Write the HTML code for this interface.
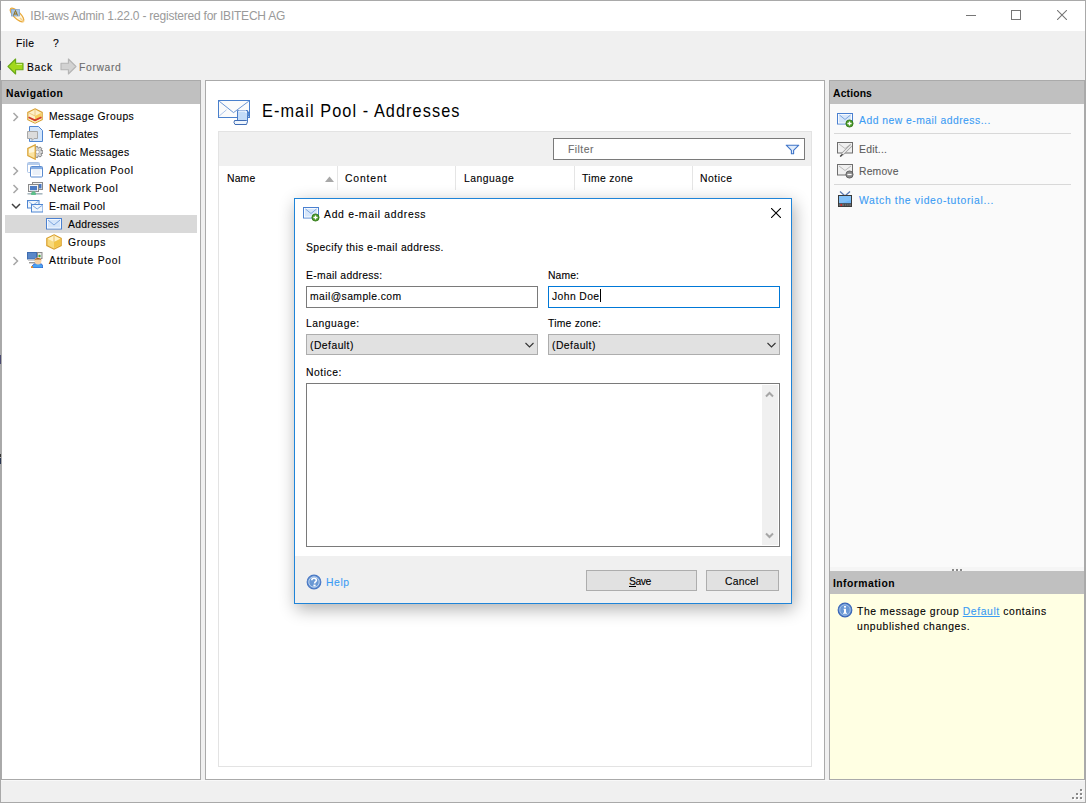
<!DOCTYPE html>
<html><head><meta charset="utf-8"><style>
html,body{margin:0;padding:0;}
body{width:1086px;height:803px;position:relative;overflow:hidden;font-family:"Liberation Sans",sans-serif;background:#f0f0f0;}
.t{position:absolute;white-space:nowrap;transform-origin:0 0;}
.r{position:absolute;display:block;}
u{text-decoration:underline;}
</style></head><body>
<div class="r" style="left:0px;top:0px;width:1086px;height:803px;background:#f0f0f0;"></div>
<div class="r" style="left:0px;top:0px;width:1086px;height:31px;background:#fff;"></div>
<div class="r" style="left:0px;top:0px;width:1086px;height:1px;background:#a9a9a9;"></div>
<div class="r" style="left:0px;top:802px;width:1086px;height:1px;background:#a9a9a9;"></div>
<div class="r" style="left:0px;top:0px;width:1px;height:803px;background:#a9a9a9;"></div>
<div class="r" style="left:1085px;top:0px;width:1px;height:803px;background:#a9a9a9;"></div>
<div class="r" style="left:0px;top:61px;width:1px;height:9px;background:#4d4d6c;"></div>
<div class="r" style="left:0px;top:355px;width:1px;height:9px;background:#4a4a70;"></div>
<div class="r" style="left:0px;top:454px;width:1px;height:3px;background:#333;"></div>
<div class="r" style="left:0px;top:458px;width:1px;height:6px;background:#2a3550;"></div>
<svg class="r" style="left:8px;top:6px;" width="18" height="18" viewBox="0 0 18 18"><g transform="rotate(-45 9 9)"><ellipse cx="9" cy="9" rx="3.4" ry="9" fill="#fff6e0" stroke="#e9a838" stroke-width="1.3"/></g>
<rect x="3.5" y="3.5" width="8" height="6.5" fill="#a9c6e6" stroke="#7d9fc8" stroke-width="0.7"/>
<path d="M5.5 9.5 L7.5 4.5 L9.5 9.5 M6.3 8 L8.7 8" stroke="#8f6c12" stroke-width="1" fill="none"/>
<path d="M12 12 L16 16" stroke="#f6d08a" stroke-width="1.5"/></svg>
<div class="t" style="left:30.30px;top:9.84px;font-size:12px;line-height:12px;color:#9a9a9a;letter-spacing:-0.221px;">IBI-aws Admin 1.22.0 - registered for IBITECH AG</div>
<div class="r" style="left:966px;top:15px;width:10px;height:1px;background:#767676;"></div>
<div class="r" style="left:1011px;top:10px;width:10px;height:10px;box-sizing:border-box;border:1px solid #767676;"></div>
<svg class="r" style="left:1057px;top:10px;" width="10" height="10" viewBox="0 0 10 10"><path d="M0 0 L10 10 M10 0 L0 10" stroke="#767676" stroke-width="1.05"/></svg>
<div class="t" style="left:16.10px;top:38.27px;font-size:11.5px;line-height:11.5px;color:#000;letter-spacing:0.463px;transform:scaleX(0.9);-webkit-text-stroke:0.12px currentColor;">File</div>
<div class="t" style="left:53.00px;top:38.27px;font-size:11.5px;line-height:11.5px;color:#000;transform:scaleX(0.9);-webkit-text-stroke:0.12px currentColor;">?</div>
<svg class="r" style="left:7px;top:58px;" width="18" height="17" viewBox="0 0 18 17"><path d="M1 8.5 L8.6 1 L8.6 5.2 L16 5.2 L16 11.8 L8.6 11.8 L8.6 16 Z" fill="#a2d81c" stroke="#68a818" stroke-width="1.1" stroke-linejoin="round"/>
<path d="M9.5 6.5 L15 6.5" stroke="#d4f08a" stroke-width="1"/></svg>
<div class="t" style="left:27.10px;top:62.27px;font-size:11.5px;line-height:11.5px;color:#000;letter-spacing:0.763px;transform:scaleX(0.9);-webkit-text-stroke:0.12px currentColor;">Back</div>
<svg class="r" style="left:59px;top:58px;" width="18" height="17" viewBox="0 0 18 17"><path d="M17 8.5 L9.4 1 L9.4 5.2 L2 5.2 L2 11.8 L9.4 11.8 L9.4 16 Z" fill="#d2d2d2" stroke="#b4b4b4" stroke-width="1.1" stroke-linejoin="round"/></svg>
<div class="t" style="left:79.30px;top:62.27px;font-size:11.5px;line-height:11.5px;color:#6d6d6d;letter-spacing:0.726px;transform:scaleX(0.9);-webkit-text-stroke:0.12px currentColor;">Forward</div>
<div class="r" style="left:1px;top:80px;width:200px;height:700px;box-sizing:border-box;border:1px solid #aaaaaa;background:#fff;"></div>
<div class="r" style="left:2px;top:81px;width:198px;height:23px;background:#c0c0c0;"></div>
<div class="t" style="left:5.50px;top:88.27px;font-size:11.5px;line-height:11.5px;color:#000;font-weight:bold;letter-spacing:0.491px;transform:scaleX(0.9);">Navigation</div>
<svg class="r" style="left:12px;top:112px;" width="8" height="10" viewBox="0 0 8 10"><path d="M1.5 1 L5.5 5 L1.5 9" stroke="#a6a6a6" stroke-width="1.5" fill="none"/></svg>
<svg class="r" style="left:27px;top:108px;" width="16" height="16" viewBox="0 0 16 16"><path d="M8 0.8 L15.2 4.4 L15.2 11.6 L8 15.2 L0.8 11.6 L0.8 4.4 Z" fill="#fdf0c8" stroke="#d9a338" stroke-width="1.2"/>
<path d="M8 2 L8 8 M1.8 4.8 L8 8" stroke="#e8c070" stroke-width="0.8" fill="none"/>
<path d="M8 8 L14.4 4.8 L14.4 9 L8 12" fill="#f6c84c" opacity="0.85"/>
<path d="M1.5 9.2 L8 12.4 L14.5 9.2" stroke="#d23c2a" stroke-width="1.8" fill="none"/>
<path d="M1.5 11 L8 14.2 L14.5 11" stroke="#fbf0b0" stroke-width="1" fill="none"/>
</svg>
<div class="t" style="left:48.50px;top:111.27px;font-size:11.5px;line-height:11.5px;color:#000;letter-spacing:0.509px;transform:scaleX(0.9);-webkit-text-stroke:0.12px currentColor;">Message Groups</div>
<svg class="r" style="left:27px;top:126px;" width="16" height="16" viewBox="0 0 16 16"><path d="M2.5 0.5 L11.5 0.5 L15.5 4.5 L15.5 15.5 L2.5 15.5 Z" fill="#d4e6fb" stroke="#4f86d2" stroke-width="1"/>
<path d="M0.5 5.5 L10.5 5.5 L10.5 12.5 L7 12.5 L5 14.5 L5 12.5 L0.5 12.5 Z" fill="#dcdcdc" stroke="#a8a8a8" stroke-width="1"/></svg>
<div class="t" style="left:48.50px;top:129.27px;font-size:11.5px;line-height:11.5px;color:#000;letter-spacing:0.283px;transform:scaleX(0.9);-webkit-text-stroke:0.12px currentColor;">Templates</div>
<svg class="r" style="left:27px;top:144px;" width="16" height="16" viewBox="0 0 16 16"><path d="M14.10 6.50 L15.94 6.69 L15.94 9.31 L14.10 9.50 L13.92 9.88 L14.92 11.44 L12.87 13.08 L11.57 11.75 L11.16 11.84 L10.57 13.60 L8.01 13.01 L8.24 11.18 L7.91 10.91 L6.17 11.55 L5.03 9.18 L6.61 8.21 L6.61 7.79 L5.03 6.82 L6.17 4.45 L7.91 5.09 L8.24 4.82 L8.01 2.99 L10.57 2.40 L11.16 4.16 L11.57 4.25 L12.87 2.92 L14.92 4.56 L13.92 6.12 Z" fill="#d6d6d6" stroke="#7a7a7a" stroke-width="0.9"/>
<circle cx="10.5" cy="8" r="1.8" fill="#fff" stroke="#999" stroke-width="0.6"/>
<path d="M8.2 0.8 L8.2 15.2 L0.8 11.6 L0.8 4.4 Z" fill="#fbe3a0" stroke="#d9a338" stroke-width="1.2"/>
<path d="M2 5 L7.3 2.4 L7.3 8 L2 9 Z" fill="#fff7dc"/>
</svg>
<div class="t" style="left:48.50px;top:147.27px;font-size:11.5px;line-height:11.5px;color:#000;letter-spacing:0.329px;transform:scaleX(0.9);-webkit-text-stroke:0.12px currentColor;">Static Messages</div>
<svg class="r" style="left:12px;top:166px;" width="8" height="10" viewBox="0 0 8 10"><path d="M1.5 1 L5.5 5 L1.5 9" stroke="#a6a6a6" stroke-width="1.5" fill="none"/></svg>
<svg class="r" style="left:27px;top:162px;" width="16" height="16" viewBox="0 0 16 16"><rect x="0.5" y="0.5" width="12" height="10" rx="1" fill="#fff" stroke="#a9c2e6"/>
<rect x="1" y="1" width="11" height="2" fill="#b6cdec"/>
<rect x="3.5" y="4.5" width="12" height="10.5" rx="1" fill="#fff" stroke="#5a8bd0"/>
<rect x="4" y="5" width="11" height="2.2" fill="#86ade2"/>
<rect x="5.5" y="8" width="8" height="5" fill="#eaf0f8"/></svg>
<div class="t" style="left:48.50px;top:165.27px;font-size:11.5px;line-height:11.5px;color:#000;letter-spacing:0.722px;transform:scaleX(0.9);-webkit-text-stroke:0.12px currentColor;">Application Pool</div>
<svg class="r" style="left:12px;top:184px;" width="8" height="10" viewBox="0 0 8 10"><path d="M1.5 1 L5.5 5 L1.5 9" stroke="#a6a6a6" stroke-width="1.5" fill="none"/></svg>
<svg class="r" style="left:27px;top:180px;" width="16" height="16" viewBox="0 0 16 16"><rect x="5.5" y="2.5" width="10" height="7" fill="#f4f4f4" stroke="#8a8a8a"/>
<rect x="12" y="4" width="2.5" height="4.5" fill="#4a78c0"/>
<rect x="1.5" y="4.5" width="10" height="7" fill="#f4f4f4" stroke="#8a8a8a"/>
<rect x="3" y="6" width="7" height="4.2" fill="#4d7cc4"/>
<rect x="4" y="11.5" width="5" height="1.2" fill="#aaa"/>
<rect x="0.5" y="13" width="15" height="1.6" fill="#a8b8c0"/>
<rect x="5" y="11.5" width="3" height="3.2" fill="#5cc08a"/><rect x="4" y="13" width="5" height="1.8" fill="#5cc08a"/></svg>
<div class="t" style="left:48.50px;top:183.27px;font-size:11.5px;line-height:11.5px;color:#000;letter-spacing:0.731px;transform:scaleX(0.9);-webkit-text-stroke:0.12px currentColor;">Network Pool</div>
<svg class="r" style="left:11px;top:203px;" width="10" height="7" viewBox="0 0 10 7"><path d="M1 1 L5 5 L9 1" stroke="#404040" stroke-width="1.5" fill="none"/></svg>
<svg class="r" style="left:27px;top:198px;" width="16" height="16" viewBox="0 0 16 16"><rect x="0.5" y="2.5" width="11.5" height="7.5" fill="#f2f7fd" stroke="#4f86d2"/>
<path d="M1.5 3.5 L6.2 7 L11 3.5" stroke="#8fb2e2" fill="none"/>
<rect x="4.5" y="6.5" width="11.5" height="7.5" fill="#f2f7fd" stroke="#4f86d2"/>
<path d="M5.5 7.5 L10.2 11 L15 7.5" stroke="#7ea6de" fill="none"/></svg>
<div class="t" style="left:48.50px;top:201.27px;font-size:11.5px;line-height:11.5px;color:#000;letter-spacing:0.342px;transform:scaleX(0.9);-webkit-text-stroke:0.12px currentColor;">E-mail Pool</div>
<div class="r" style="left:5px;top:215px;width:192px;height:18px;background:#d9d9d9;"></div>
<svg class="r" style="left:46px;top:216px;" width="16" height="16" viewBox="0 0 16 16"><rect x="0.5" y="2.5" width="15" height="10.5" fill="#d6e6fa" stroke="#4a80d0"/>
<rect x="1.5" y="3.5" width="13" height="8.5" fill="none" stroke="#fff" stroke-width="0.8"/>
<path d="M2 4 L8 9 L14 4" stroke="#7ea6de" stroke-width="1" fill="none"/></svg>
<div class="t" style="left:67.50px;top:219.27px;font-size:11.5px;line-height:11.5px;color:#000;letter-spacing:0.296px;transform:scaleX(0.9);-webkit-text-stroke:0.12px currentColor;">Addresses</div>
<svg class="r" style="left:46px;top:234px;" width="16" height="16" viewBox="0 0 16 16"><path d="M8 0.8 L15.2 4.4 L15.2 11.6 L8 15.2 L0.8 11.6 L0.8 4.4 Z" fill="#f8d97a" stroke="#d9a030" stroke-width="1.2"/>
<path d="M1.5 4.8 L8 8 L14.5 4.8 L8 1.5 Z" fill="#fff2c4"/>
<path d="M8 8 L14.5 4.8 L14.5 11 L8 14" fill="#f0be3a" opacity="0.8"/>
<path d="M8 2 L8 8" stroke="#e0b050" stroke-width="0.8"/></svg>
<div class="t" style="left:67.50px;top:237.27px;font-size:11.5px;line-height:11.5px;color:#000;letter-spacing:0.749px;transform:scaleX(0.9);-webkit-text-stroke:0.12px currentColor;">Groups</div>
<svg class="r" style="left:12px;top:256px;" width="8" height="10" viewBox="0 0 8 10"><path d="M1.5 1 L5.5 5 L1.5 9" stroke="#a6a6a6" stroke-width="1.5" fill="none"/></svg>
<svg class="r" style="left:27px;top:252px;" width="16" height="16" viewBox="0 0 16 16"><rect x="0.5" y="0.5" width="9" height="6.5" fill="#5a88c8" stroke="#3e6cb0"/>
<rect x="1" y="7.5" width="8" height="1.5" fill="#cfcfcf"/><rect x="2" y="10" width="6" height="1.4" fill="#9a9a9a"/>
<rect x="10.5" y="0.5" width="4.5" height="6" fill="#e8e8e8" stroke="#8a8a8a"/>
<circle cx="12.5" cy="4" r="1.2" fill="#3fa83a"/>
<path d="M5 16 C5 12.5 7 11.5 11 11.5 C15 11.5 16 12.5 16 16 Z" fill="#4aa2f2" stroke="#2a50c0" stroke-width="0.8"/>
<circle cx="11" cy="9" r="3.4" fill="#f6d2a6"/>
<path d="M7.5 8.5 C7.5 5 14.5 5 14.5 8.5 L13.5 7.5 L8.5 7.5 Z" fill="#9a5214"/>
<rect x="4" y="14.3" width="2" height="1.7" fill="#e88a20"/></svg>
<div class="t" style="left:48.50px;top:255.27px;font-size:11.5px;line-height:11.5px;color:#000;letter-spacing:0.803px;transform:scaleX(0.9);-webkit-text-stroke:0.12px currentColor;">Attribute Pool</div>
<div class="r" style="left:205px;top:80px;width:620px;height:700px;box-sizing:border-box;border:1px solid #aaaaaa;background:#fff;"></div>
<svg class="r" style="left:218px;top:100px;" width="33" height="26" viewBox="0 0 33 26"><rect x="0.5" y="0.5" width="31" height="17" fill="#fbfbfb" stroke="#4a80cc" stroke-width="1"/>
<path d="M1.2 1.2 L15.5 12.6 L30.8 1.2" stroke="#5a8ad0" stroke-width="0.9" fill="none"/>
<path d="M1.2 16 L8.5 9.8" stroke="#9ab8e4" stroke-width="0.8" fill="none"/>
<path d="M19.5 10.5 L29.5 10.5 L29.5 21.5 L19.5 21.5 Z" fill="#c4dcf8" stroke="#4a7cc8" stroke-width="1"/>
<path d="M20.5 11 L28 11 L28 13" stroke="#fff" stroke-width="1" fill="none"/>
<path d="M16.5 20.5 L28.5 20.5 L29.5 21.5 L28.5 24.5 L17 24.5 L16 22.5 Z" fill="#eef5fd" stroke="#3f6cb4" stroke-width="1"/>
<path d="M29.5 12 L31 12 L31 16 L29.5 16" fill="#6a9ad8" stroke="#3f74c4" stroke-width="0.8"/></svg>
<div class="t" style="left:262.10px;top:102.34px;font-size:18.5px;line-height:18.5px;color:#000;letter-spacing:1.224px;transform:scaleX(0.88);">E-mail Pool - Addresses</div>
<div class="r" style="left:218px;top:131px;width:594px;height:636px;box-sizing:border-box;border:1px solid #e3e3e3;background:#fff;"></div>
<div class="r" style="left:219px;top:132px;width:592px;height:34px;background:#f0f0f0;"></div>
<div class="r" style="left:553px;top:138px;width:252px;height:22px;box-sizing:border-box;border:1px solid #7a7a7a;background:#fff;"></div>
<div class="t" style="left:567.50px;top:144.27px;font-size:11.5px;line-height:11.5px;color:#6d6d6d;letter-spacing:0.524px;transform:scaleX(0.9);-webkit-text-stroke:0.12px currentColor;">Filter</div>
<svg class="r" style="left:785px;top:144px;" width="15" height="11" viewBox="0 0 15 11"><path d="M1.2 1.2 L13.8 1.2 L8.6 6.4 L8.6 9.8 L6.4 9.8 L6.4 6.4 Z" fill="#e0ecfb" stroke="#3f74c8" stroke-width="1.1" stroke-linejoin="round"/></svg>
<div class="r" style="left:337px;top:166px;width:1px;height:24px;background:#e5e5e5;"></div>
<div class="r" style="left:455px;top:166px;width:1px;height:24px;background:#e5e5e5;"></div>
<div class="r" style="left:574px;top:166px;width:1px;height:24px;background:#e5e5e5;"></div>
<div class="r" style="left:692px;top:166px;width:1px;height:24px;background:#e5e5e5;"></div>
<div class="t" style="left:226.50px;top:173.27px;font-size:11.5px;line-height:11.5px;color:#000;letter-spacing:0.211px;transform:scaleX(0.9);-webkit-text-stroke:0.12px currentColor;">Name</div>
<div class="t" style="left:345.20px;top:173.27px;font-size:11.5px;line-height:11.5px;color:#000;letter-spacing:0.950px;transform:scaleX(0.9);-webkit-text-stroke:0.12px currentColor;">Content</div>
<div class="t" style="left:463.50px;top:173.27px;font-size:11.5px;line-height:11.5px;color:#000;letter-spacing:0.575px;transform:scaleX(0.9);-webkit-text-stroke:0.12px currentColor;">Language</div>
<div class="t" style="left:581.90px;top:173.27px;font-size:11.5px;line-height:11.5px;color:#000;letter-spacing:0.393px;transform:scaleX(0.9);-webkit-text-stroke:0.12px currentColor;">Time zone</div>
<div class="t" style="left:700.20px;top:173.27px;font-size:11.5px;line-height:11.5px;color:#000;letter-spacing:0.613px;transform:scaleX(0.9);-webkit-text-stroke:0.12px currentColor;">Notice</div>
<svg class="r" style="left:325px;top:176px;" width="10" height="6" viewBox="0 0 10 6"><path d="M0 6 L4.5 0.5 L9 6 Z" fill="#a8a8a8"/></svg>
<div class="r" style="left:829px;top:80px;width:256px;height:700px;box-sizing:border-box;border:1px solid #aaaaaa;background:#fafafa;"></div>
<div class="r" style="left:830px;top:81px;width:254px;height:23px;background:#c0c0c0;"></div>
<div class="t" style="left:833.20px;top:88.27px;font-size:11.5px;line-height:11.5px;color:#000;font-weight:bold;letter-spacing:0.170px;transform:scaleX(0.9);">Actions</div>
<svg class="r" style="left:837px;top:113px;" width="17" height="15" viewBox="0 0 17 15"><rect x="0.5" y="0.5" width="15" height="10.5" fill="#d6e6fa" stroke="#4a80d0"/>
<rect x="1.5" y="1.5" width="13" height="8.5" fill="none" stroke="#fff" stroke-width="0.8"/>
<path d="M2.5 2 L8 6.5 L13.5 2" stroke="#7ea6de" stroke-width="1" fill="none"/>
<circle cx="12.5" cy="10.5" r="3.6" fill="#4b9a26" stroke="#2f7418" stroke-width="0.8"/>
<path d="M12.5 8.4 L12.5 12.6 M10.4 10.5 L14.6 10.5" stroke="#fff" stroke-width="1.3"/></svg>
<div class="t" style="left:859.20px;top:115.27px;font-size:11.5px;line-height:11.5px;color:#3c9cf4;letter-spacing:0.537px;transform:scaleX(0.9);-webkit-text-stroke:0.12px currentColor;">Add new e-mail address...</div>
<div class="r" style="left:834px;top:133px;width:237px;height:1px;background:#d8d8d8;"></div>
<svg class="r" style="left:837px;top:142px;" width="17" height="15" viewBox="0 0 17 15"><rect x="0.5" y="0.5" width="15" height="10.5" fill="#f0f0f0" stroke="#6e6e6e"/>
<path d="M2 2 L8 6.5 L14 2" stroke="#bbb" stroke-width="1" fill="none"/>
<path d="M5 12.5 L14 3.5" stroke="#9a9a9a" stroke-width="2.8"/><path d="M5 12.5 L14 3.5" stroke="#f2f2f2" stroke-width="1.2"/>
<path d="M3.2 14.6 L5.6 12.2" stroke="#444" stroke-width="1.4"/></svg>
<div class="t" style="left:859.20px;top:144.27px;font-size:11.5px;line-height:11.5px;color:#5c5c5c;letter-spacing:0.267px;transform:scaleX(0.9);-webkit-text-stroke:0.12px currentColor;">Edit...</div>
<svg class="r" style="left:837px;top:164px;" width="17" height="15" viewBox="0 0 17 15"><rect x="0.5" y="0.5" width="15" height="10.5" fill="#f0f0f0" stroke="#6e6e6e"/>
<path d="M2 2 L8 6.5 L14 2" stroke="#bbb" stroke-width="1" fill="none"/>
<circle cx="12.5" cy="10.5" r="3.6" fill="#8a8a8a" stroke="#555" stroke-width="0.8"/>
<path d="M10.4 10.5 L14.6 10.5" stroke="#fff" stroke-width="1.3"/></svg>
<div class="t" style="left:859.20px;top:166.27px;font-size:11.5px;line-height:11.5px;color:#5c5c5c;letter-spacing:0.196px;transform:scaleX(0.9);-webkit-text-stroke:0.12px currentColor;">Remove</div>
<div class="r" style="left:834px;top:184px;width:237px;height:1px;background:#d8d8d8;"></div>
<svg class="r" style="left:837px;top:190px;" width="17" height="18" viewBox="0 0 17 18"><path d="M3 1.5 L7.5 5.5 M13 1.5 L8.5 5.5" stroke="#5a7ab0" stroke-width="1.3"/>
<rect x="1.5" y="5.5" width="13" height="11" fill="#70b6f6" stroke="#3a3a3a"/>
<path d="M2 6 L14 6 L14 10 L2 14 Z" fill="#90c8fa" opacity="0.6"/>
<rect x="1.5" y="13.6" width="13" height="2.9" fill="#6a6a6a" stroke="#333" stroke-width="0.6"/>
<circle cx="4.2" cy="15" r="0.9" fill="#e02020"/><path d="M7 15 L13 15" stroke="#222" stroke-width="0.8" stroke-dasharray="1 1.2"/></svg>
<div class="t" style="left:859.20px;top:194.77px;font-size:11.5px;line-height:11.5px;color:#3c9cf4;letter-spacing:0.748px;transform:scaleX(0.9);-webkit-text-stroke:0.12px currentColor;">Watch the video-tutorial...</div>
<div class="r" style="left:830px;top:567px;width:254px;height:4px;background:#f5f5f5;"></div>
<div class="r" style="left:953px;top:570px;width:2px;height:2px;background:#fff;"></div>
<div class="r" style="left:952px;top:569px;width:2px;height:2px;background:#8a8a8a;"></div>
<div class="r" style="left:957px;top:570px;width:2px;height:2px;background:#fff;"></div>
<div class="r" style="left:956px;top:569px;width:2px;height:2px;background:#8a8a8a;"></div>
<div class="r" style="left:961px;top:570px;width:2px;height:2px;background:#fff;"></div>
<div class="r" style="left:960px;top:569px;width:2px;height:2px;background:#8a8a8a;"></div>
<div class="r" style="left:830px;top:571px;width:254px;height:23px;background:#c0c0c0;"></div>
<div class="r" style="left:830px;top:594px;width:254px;height:185px;background:#ffffe3;"></div>
<div class="r" style="left:829px;top:571px;width:1px;height:208px;background:#aaaaaa;"></div>
<div class="r" style="left:1084px;top:571px;width:1px;height:208px;background:#aaaaaa;"></div>
<div class="t" style="left:833.20px;top:578.27px;font-size:11.5px;line-height:11.5px;color:#000;font-weight:bold;letter-spacing:0.513px;transform:scaleX(0.9);">Information</div>
<svg class="r" style="left:837px;top:602px;" width="16" height="16" viewBox="0 0 16 16"><circle cx="8" cy="8" r="6.8" fill="#6a98d4" stroke="#3a66b8" stroke-width="1.2"/>
<circle cx="8" cy="8" r="5.2" fill="none" stroke="#a8c4ea" stroke-width="0.8"/>
<rect x="7" y="4" width="2" height="1.6" fill="#fff"/><path d="M6.6 6.8 L9 6.8 L9 10.8 L10 10.8 L10 11.8 L6 11.8 L6 10.8 L7 10.8 L7 7.8 L6.6 7.8 Z" fill="#fff"/></svg>
<div class="t" style="left:857.00px;top:606.27px;font-size:11.5px;line-height:11.5px;color:#000;letter-spacing:0.670px;transform:scaleX(0.9);-webkit-text-stroke:0.12px currentColor;">The message group <u style="color:#3c9cf4">Default</u> contains</div>
<div class="t" style="left:857.00px;top:621.27px;font-size:11.5px;line-height:11.5px;color:#000;letter-spacing:0.701px;transform:scaleX(0.9);-webkit-text-stroke:0.12px currentColor;">unpublished changes.</div>
<div class="r" style="left:1px;top:780px;width:1084px;height:1px;background:#f8f8f8;"></div>
<div class="r" style="left:1081px;top:790px;width:2px;height:2px;background:#fff;"></div>
<div class="r" style="left:1080px;top:789px;width:2px;height:2px;background:#8a8a8a;"></div>
<div class="r" style="left:1077px;top:794px;width:2px;height:2px;background:#fff;"></div>
<div class="r" style="left:1076px;top:793px;width:2px;height:2px;background:#8a8a8a;"></div>
<div class="r" style="left:1081px;top:794px;width:2px;height:2px;background:#fff;"></div>
<div class="r" style="left:1080px;top:793px;width:2px;height:2px;background:#8a8a8a;"></div>
<div class="r" style="left:1073px;top:798px;width:2px;height:2px;background:#fff;"></div>
<div class="r" style="left:1072px;top:797px;width:2px;height:2px;background:#8a8a8a;"></div>
<div class="r" style="left:1077px;top:798px;width:2px;height:2px;background:#fff;"></div>
<div class="r" style="left:1076px;top:797px;width:2px;height:2px;background:#8a8a8a;"></div>
<div class="r" style="left:1081px;top:798px;width:2px;height:2px;background:#fff;"></div>
<div class="r" style="left:1080px;top:797px;width:2px;height:2px;background:#8a8a8a;"></div>
<div class="r" style="left:294px;top:198px;width:498px;height:406px;box-sizing:border-box;border:1px solid #1f84d8;background:#fff;box-shadow:2px 5px 16px rgba(0,0,0,0.32);"></div>
<div class="r" style="left:295px;top:556px;width:496px;height:47px;background:#f0f0f0;"></div>
<svg class="r" style="left:303px;top:207px;" width="17" height="15" viewBox="0 0 17 15"><rect x="0.5" y="0.5" width="15" height="10.5" fill="#d6e6fa" stroke="#4a80d0"/>
<rect x="1.5" y="1.5" width="13" height="8.5" fill="none" stroke="#fff" stroke-width="0.8"/>
<path d="M2.5 2 L8 6.5 L13.5 2" stroke="#7ea6de" stroke-width="1" fill="none"/>
<circle cx="12.5" cy="10.5" r="3.6" fill="#4b9a26" stroke="#2f7418" stroke-width="0.8"/>
<path d="M12.5 8.4 L12.5 12.6 M10.4 10.5 L14.6 10.5" stroke="#fff" stroke-width="1.3"/></svg>
<div class="t" style="left:324.00px;top:209.27px;font-size:11.5px;line-height:11.5px;color:#000;letter-spacing:0.805px;transform:scaleX(0.9);-webkit-text-stroke:0.12px currentColor;">Add e-mail address</div>
<svg class="r" style="left:771px;top:208px;" width="10" height="10" viewBox="0 0 10 10"><path d="M0 0 L10 10 M10 0 L0 10" stroke="#000" stroke-width="1.1"/></svg>
<div class="t" style="left:306.20px;top:242.27px;font-size:11.5px;line-height:11.5px;color:#000;letter-spacing:0.447px;transform:scaleX(0.9);-webkit-text-stroke:0.12px currentColor;">Specify this e-mail address.</div>
<div class="t" style="left:306.20px;top:270.27px;font-size:11.5px;line-height:11.5px;color:#000;letter-spacing:0.340px;transform:scaleX(0.9);-webkit-text-stroke:0.12px currentColor;">E-mail address:</div>
<div class="t" style="left:548.30px;top:270.27px;font-size:11.5px;line-height:11.5px;color:#000;letter-spacing:0.108px;transform:scaleX(0.9);-webkit-text-stroke:0.12px currentColor;">Name:</div>
<div class="r" style="left:306px;top:286px;width:232px;height:22px;box-sizing:border-box;border:1px solid #7a7a7a;background:#fff;"></div>
<div class="t" style="left:309.80px;top:291.27px;font-size:11.5px;line-height:11.5px;color:#000;letter-spacing:0.466px;transform:scaleX(0.9);-webkit-text-stroke:0.12px currentColor;">mail@sample.com</div>
<div class="r" style="left:548px;top:286px;width:232px;height:22px;box-sizing:border-box;border:1px solid #0078d7;background:#fff;"></div>
<div class="t" style="left:551.50px;top:291.27px;font-size:11.5px;line-height:11.5px;color:#000;letter-spacing:0.448px;transform:scaleX(0.9);-webkit-text-stroke:0.12px currentColor;">John Doe</div>
<div class="r" style="left:600px;top:289px;width:1px;height:13px;background:#000;"></div>
<div class="t" style="left:306.20px;top:318.27px;font-size:11.5px;line-height:11.5px;color:#000;letter-spacing:0.575px;transform:scaleX(0.9);-webkit-text-stroke:0.12px currentColor;">Language:</div>
<div class="t" style="left:548.30px;top:318.27px;font-size:11.5px;line-height:11.5px;color:#000;letter-spacing:0.253px;transform:scaleX(0.9);-webkit-text-stroke:0.12px currentColor;">Time zone:</div>
<div class="r" style="left:306px;top:334px;width:232px;height:21px;box-sizing:border-box;border:1px solid #adadad;background:#e1e1e1;"></div>
<div class="t" style="left:310.10px;top:340.27px;font-size:11.5px;line-height:11.5px;color:#000;letter-spacing:0.515px;transform:scaleX(0.9);-webkit-text-stroke:0.12px currentColor;">(Default)</div>
<svg class="r" style="left:525px;top:342px;" width="10" height="7" viewBox="0 0 10 7"><path d="M0.5 1 L4.5 5 L8.5 1" stroke="#333" stroke-width="1.1" fill="none"/></svg>
<div class="r" style="left:548px;top:334px;width:232px;height:21px;box-sizing:border-box;border:1px solid #adadad;background:#e1e1e1;"></div>
<div class="t" style="left:552.10px;top:340.27px;font-size:11.5px;line-height:11.5px;color:#000;letter-spacing:0.515px;transform:scaleX(0.9);-webkit-text-stroke:0.12px currentColor;">(Default)</div>
<svg class="r" style="left:767px;top:342px;" width="10" height="7" viewBox="0 0 10 7"><path d="M0.5 1 L4.5 5 L8.5 1" stroke="#333" stroke-width="1.1" fill="none"/></svg>
<div class="t" style="left:306.20px;top:367.27px;font-size:11.5px;line-height:11.5px;color:#000;letter-spacing:0.570px;transform:scaleX(0.9);-webkit-text-stroke:0.12px currentColor;">Notice:</div>
<div class="r" style="left:306px;top:383px;width:474px;height:164px;box-sizing:border-box;border:1px solid #7a7a7a;background:#fff;"></div>
<div class="r" style="left:762px;top:385px;width:16px;height:160px;background:#f0f0f0;"></div>
<svg class="r" style="left:765px;top:390px;" width="9" height="8" viewBox="0 0 9 8"><path d="M1 6.5 L4.5 3 L8 6.5" stroke="#a6a6a6" stroke-width="2" fill="none"/></svg>
<svg class="r" style="left:765px;top:532px;" width="9" height="8" viewBox="0 0 9 8"><path d="M1 1.5 L4.5 5 L8 1.5" stroke="#a6a6a6" stroke-width="2" fill="none"/></svg>
<svg class="r" style="left:306px;top:574px;" width="16" height="16" viewBox="0 0 16 16"><circle cx="8" cy="8" r="6.8" fill="#6a98d4" stroke="#4a78c4" stroke-width="1.2"/>
<circle cx="8" cy="8" r="5.2" fill="none" stroke="#c4d8f2" stroke-width="0.9"/>
<path d="M5.8 6.3 C5.8 3.6 10.4 3.6 10.4 6.2 C10.4 7.6 8.6 7.8 8.6 9.4" stroke="#fff" stroke-width="1.6" fill="none"/>
<rect x="7.4" y="10.6" width="2.2" height="1.8" fill="#fff"/></svg>
<div class="t" style="left:325.60px;top:577.27px;font-size:11.5px;line-height:11.5px;color:#3c9cf4;letter-spacing:0.656px;transform:scaleX(0.9);-webkit-text-stroke:0.12px currentColor;">Help</div>
<div class="r" style="left:586px;top:570px;width:111px;height:21px;box-sizing:border-box;border:1px solid #adadad;background:#e1e1e1;"></div>
<div class="t" style="left:629.10px;top:576.27px;font-size:11.5px;line-height:11.5px;color:#000;letter-spacing:-0.474px;transform:scaleX(0.9);-webkit-text-stroke:0.12px currentColor;">Save</div>
<div class="r" style="left:629px;top:586px;width:7px;height:1px;background:#000;"></div>
<div class="r" style="left:706px;top:570px;width:73px;height:21px;box-sizing:border-box;border:1px solid #adadad;background:#e1e1e1;"></div>
<div class="t" style="left:725.40px;top:576.27px;font-size:11.5px;line-height:11.5px;color:#000;letter-spacing:0.262px;transform:scaleX(0.9);-webkit-text-stroke:0.12px currentColor;">Cancel</div>
</body></html>
